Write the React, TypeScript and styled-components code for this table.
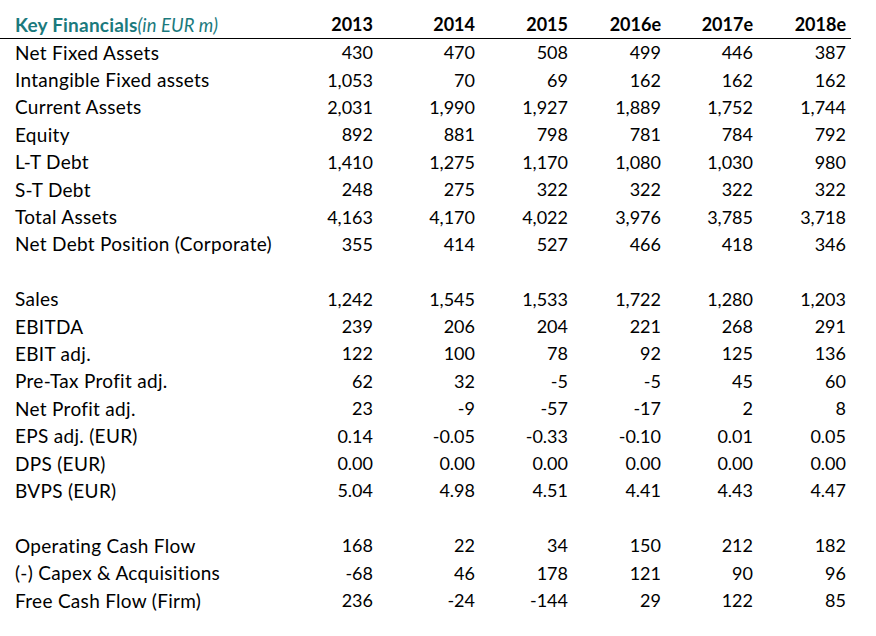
import React from 'react'
import styled, { createGlobalStyle } from 'styled-components'

const GlobalStyle = createGlobalStyle`
  html, body {
    margin: 0;
    padding: 0;
    background: #ffffff;
  }
`

const teal = '#1b7a7d'

const Page = styled.div`
  padding-top: 11px;
  font-family: Lato, 'Open Sans', sans-serif;
  font-size: 18px;
  font-variant-ligatures: none;
  color: #000;
  width: 876px;
`

const Table = styled.div`
  width: 851px;
`

const Row = styled.div<{ $head?: boolean }>`
  display: grid;
  grid-template-columns: 280px 98px 102px 93px 93px 92px 93px;
  height: ${(p) => (p.$head ? '26.5px' : '27.4px')};
  align-items: center;
  border-bottom: ${(p) => (p.$head ? '1.5px solid #000' : 'none')};
  font-weight: ${(p) => (p.$head ? 700 : 400)};
`

const Label = styled.div`
  padding-left: 15px;
  white-space: nowrap;
  font-size: 19px;
  letter-spacing: 0.3px;
`

const Title = styled.span`
  color: ${teal};
  font-weight: 700;
  font-size: 19px;
  letter-spacing: 0.2px;
`

const Unit = styled.span`
  color: ${teal};
  font-style: italic;
  font-weight: 400;
  font-size: 18.4px;
  letter-spacing: 0.1px;
`

const Cell = styled.div`
  text-align: right;
  padding-right: 5px;
  white-space: nowrap;
`

const Spacer = styled.div`
  height: 27.4px;
`

const years = ['2013', '2014', '2015', '2016e', '2017e', '2018e']

type Line = [string, string[]] | null

const lines: Line[] = [
  ['Net Fixed Assets', ['430', '470', '508', '499', '446', '387']],
  ['Intangible Fixed assets', ['1,053', '70', '69', '162', '162', '162']],
  ['Current Assets', ['2,031', '1,990', '1,927', '1,889', '1,752', '1,744']],
  ['Equity', ['892', '881', '798', '781', '784', '792']],
  ['L-T Debt', ['1,410', '1,275', '1,170', '1,080', '1,030', '980']],
  ['S-T Debt', ['248', '275', '322', '322', '322', '322']],
  ['Total Assets', ['4,163', '4,170', '4,022', '3,976', '3,785', '3,718']],
  ['Net Debt Position (Corporate)', ['355', '414', '527', '466', '418', '346']],
  null,
  ['Sales', ['1,242', '1,545', '1,533', '1,722', '1,280', '1,203']],
  ['EBITDA', ['239', '206', '204', '221', '268', '291']],
  ['EBIT adj.', ['122', '100', '78', '92', '125', '136']],
  ['Pre-Tax Profit adj.', ['62', '32', '-5', '-5', '45', '60']],
  ['Net Profit adj.', ['23', '-9', '-57', '-17', '2', '8']],
  ['EPS adj. (EUR)', ['0.14', '-0.05', '-0.33', '-0.10', '0.01', '0.05']],
  ['DPS (EUR)', ['0.00', '0.00', '0.00', '0.00', '0.00', '0.00']],
  ['BVPS (EUR)', ['5.04', '4.98', '4.51', '4.41', '4.43', '4.47']],
  null,
  ['Operating Cash Flow', ['168', '22', '34', '150', '212', '182']],
  ['(-) Capex & Acquisitions', ['-68', '46', '178', '121', '90', '96']],
  ['Free Cash Flow (Firm)', ['236', '-24', '-144', '29', '122', '85']],
]

const App = () => (
  <>
    <GlobalStyle />
    <Page>
      <Table>
        <Row $head>
          <Label>
            <Title>Key Financials</Title>
            <Unit>(in EUR m)</Unit>
          </Label>
          {years.map((y) => (
            <Cell key={y}>{y}</Cell>
          ))}
        </Row>
        {lines.map((line, i) =>
          line ? (
            <Row key={i}>
              <Label>{line[0]}</Label>
              {line[1].map((v, j) => (
                <Cell key={j}>{v}</Cell>
              ))}
            </Row>
          ) : (
            <Spacer key={i} />
          ),
        )}
      </Table>
    </Page>
  </>
)

export default App
